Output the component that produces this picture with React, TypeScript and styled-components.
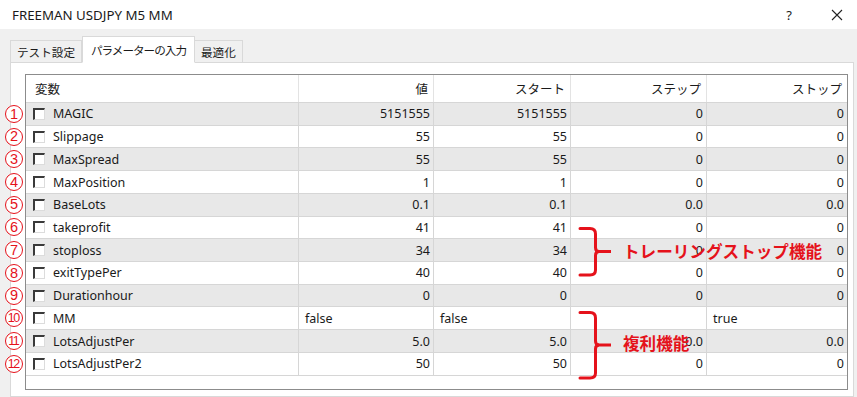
import React from 'react'
import styled, { createGlobalStyle } from 'styled-components'

const GlobalStyle = createGlobalStyle`
  html, body {
    margin: 0;
    padding: 0;
    background: #ffffff;
  }
  body {
    font-family: 'Noto Sans', 'Noto Sans CJK JP', sans-serif;
    color: #1a1a1a;
  }
`

const RED = '#e5121b'

const Window = styled.div`
  width: 857px;
  height: 397px;
  overflow: hidden;
  display: flex;
  flex-direction: column;
  background: #f0f0f0;
`

const TitleBar = styled.div`
  height: 29px;
  flex-shrink: 0;
  background: #ffffff;
  display: flex;
  align-items: center;
  gap: 8px;
  padding: 0 0 0 12px;
  font-size: 13.3px;
`

const TitleText = styled.div`
  flex: 1;
  padding-top: 1px;
`

const TitleButton = styled.div`
  width: 40px;
  height: 29px;
  display: flex;
  align-items: center;
  justify-content: center;
  font-size: 13px;
`

const TabStrip = styled.div`
  display: flex;
  align-items: flex-end;
  margin-top: 7px;
  padding-left: 10px;
  height: 27px;
  margin-bottom: -1px;
  position: relative;
  z-index: 1;
`

interface TabProps {
  active?: boolean
}

const Tab = styled.div<TabProps>`
  height: ${(p) => (p.active ? '27px' : '23px')};
  box-sizing: border-box;
  display: flex;
  align-items: center;
  padding: ${(p) => (p.active ? '0 8px 0 8px' : '0 6px 0 6px')};
  border: 1px solid #d9d9d9;
  border-bottom: ${(p) => (p.active ? '1px solid #ffffff' : '1px solid #d9d9d9')};
  border-left: ${(p) => (p.active ? '1px solid #d9d9d9' : 'none')};
  background: ${(p) => (p.active ? '#ffffff' : '#f0f0f0')};
  font-size: 11.6px;
  letter-spacing: ${(p) => (p.active ? '-1px' : '0')};
  &:first-child {
    border-left: 1px solid #d9d9d9;
  }
`

const Panel = styled.div`
  flex: 1;
  background: #ffffff;
  border: 1px solid #d9d9d9;
  margin-left: 10px;
  margin-right: 3px;
  padding: 11px 0 0 14px;
`

const ListBox = styled.div`
  position: relative;
  width: 823px;
  height: 316px;
  box-sizing: border-box;
  border: 1px solid #8c8c8c;
  background: #ffffff;
  font-size: 12.5px;
`

const GRID = '273px 135px 137px 136px 140px'

interface RowProps {
  shaded?: boolean
}

const HeaderRow = styled.div`
  display: grid;
  grid-template-columns: ${GRID};
  height: 28px;
  box-sizing: border-box;
  border-bottom: 1px solid #d6d6d6;
`

const HeaderCell = styled.div<{ left?: boolean }>`
  display: flex;
  align-items: center;
  justify-content: ${(p) => (p.left ? 'flex-start' : 'flex-end')};
  padding: ${(p) => (p.left ? '0 0 0 9px' : '0 5px 0 0')};
  border-right: 1px solid #e3e3e3;
  &:last-child {
    border-right: none;
  }
`

const Row = styled.div<RowProps>`
  position: relative;
  display: grid;
  grid-template-columns: ${GRID};
  height: 22.73px;
  box-sizing: border-box;
  border-bottom: 1px solid #d6d6d6;
  background: ${(p) => (p.shaded ? '#e8e8e8' : '#ffffff')};
`

const Cell = styled.div<{ left?: boolean }>`
  display: flex;
  align-items: center;
  justify-content: ${(p) => (p.left ? 'flex-start' : 'flex-end')};
  padding: ${(p) => (p.left ? '0 0 0 6px' : '0 3px 0 0')};
  border-right: 1px solid #d6d6d6;
  white-space: nowrap;
  &:last-child {
    border-right: none;
  }
`

const NameCell = styled.div`
  display: flex;
  align-items: center;
  gap: 8px;
  padding-left: 7px;
  border-right: 1px solid #d6d6d6;
`

const CheckBox = styled.span`
  width: 12px;
  height: 12px;
  box-sizing: border-box;
  background: #ffffff;
  border-style: solid;
  border-width: 2px 1px 1px 2px;
  border-color: #3a3a3a #dcdcdc #dcdcdc #3a3a3a;
`

const Marker = styled.span<{ wide?: boolean }>`
  position: absolute;
  left: -21px;
  top: 50%;
  margin-top: -9px;
  width: 18px;
  height: 18px;
  box-sizing: border-box;
  border: 1.5px solid ${RED};
  border-radius: 50%;
  background: #ffffff;
  color: ${RED};
  display: flex;
  align-items: center;
  justify-content: center;
  font-family: 'Liberation Sans', sans-serif;
  font-size: ${(p) => (p.wide ? '12.5px' : '14.5px')};
  letter-spacing: ${(p) => (p.wide ? '-1.5px' : '0')};
  line-height: 1;
  padding-right: ${(p) => (p.wide ? '1.5px' : '0')};
`

const Brace = styled.svg<{ x: number; y: number }>`
  position: absolute;
  left: ${(p) => p.x}px;
  top: ${(p) => p.y}px;
  overflow: visible;
`

const Note = styled.div<{ x: number; y: number }>`
  position: absolute;
  left: ${(p) => p.x}px;
  top: ${(p) => p.y}px;
  color: ${RED};
  font-family: 'Noto Sans CJK JP', sans-serif;
  font-weight: 700;
  font-size: 16.6px;
  line-height: 20px;
  white-space: nowrap;
`

type Param = {
  name: string
  value: string
  start: string
  step: string
  stop: string
  text?: boolean
}

const params: Param[] = [
  { name: 'MAGIC', value: '5151555', start: '5151555', step: '0', stop: '0' },
  { name: 'Slippage', value: '55', start: '55', step: '0', stop: '0' },
  { name: 'MaxSpread', value: '55', start: '55', step: '0', stop: '0' },
  { name: 'MaxPosition', value: '1', start: '1', step: '0', stop: '0' },
  { name: 'BaseLots', value: '0.1', start: '0.1', step: '0.0', stop: '0.0' },
  { name: 'takeprofit', value: '41', start: '41', step: '0', stop: '0' },
  { name: 'stoploss', value: '34', start: '34', step: '0', stop: '0' },
  { name: 'exitTypePer', value: '40', start: '40', step: '0', stop: '0' },
  { name: 'Durationhour', value: '0', start: '0', step: '0', stop: '0' },
  { name: 'MM', value: 'false', start: 'false', step: '', stop: 'true', text: true },
  { name: 'LotsAdjustPer', value: '5.0', start: '5.0', step: '0.0', stop: '0.0' },
  { name: 'LotsAdjustPer2', value: '50', start: '50', step: '0', stop: '0' },
]

const BracePath = ({ height }: { height: number }) => {
  const mid = height / 2
  return (
    <g fill="none" stroke={RED} strokeWidth={3} strokeLinecap="round">
      <path
        d={`M1 1.5 H11 Q16.5 1.5 16.5 7 V${mid - 4} Q16.5 ${mid} 20 ${mid} Q16.5 ${mid} 16.5 ${mid + 4} V${height - 6} Q16.5 ${height - 1} 11 ${height - 1} H1`}
      />
      <path d={`M19 ${mid} H32`} strokeLinecap="butt" />
    </g>
  )
}

const App = () => {
  return (
    <>
      <GlobalStyle />
      <Window>
        <TitleBar>
          <TitleText>FREEMAN USDJPY M5 MM</TitleText>
          <TitleButton>?</TitleButton>
          <TitleButton>
            <svg width="12" height="12" viewBox="0 0 12 12">
              <path d="M1 1 L11 11 M11 1 L1 11" stroke="#222" strokeWidth="1.1" />
            </svg>
          </TitleButton>
        </TitleBar>
        <TabStrip>
          <Tab>テスト設定</Tab>
          <Tab active>パラメーターの入力</Tab>
          <Tab>最適化</Tab>
        </TabStrip>
        <Panel>
          <ListBox>
            <HeaderRow>
              <HeaderCell left>変数</HeaderCell>
              <HeaderCell>値</HeaderCell>
              <HeaderCell>スタート</HeaderCell>
              <HeaderCell>ステップ</HeaderCell>
              <HeaderCell>ストップ</HeaderCell>
            </HeaderRow>
            {params.map((p, i) => (
              <Row key={p.name} shaded={i % 2 === 0}>
                <Marker wide={i >= 9}>{i + 1}</Marker>
                <NameCell>
                  <CheckBox />
                  {p.name}
                </NameCell>
                <Cell left={p.text}>{p.value}</Cell>
                <Cell left={p.text}>{p.start}</Cell>
                <Cell left={p.text}>{p.step}</Cell>
                <Cell left={p.text}>{p.stop}</Cell>
              </Row>
            ))}
            <Brace x={553} y={152} width={34} height={50}>
              <BracePath height={49} />
            </Brace>
            <Note x={597} y={166}>トレーリングストップ機能</Note>
            <Brace x={553} y={236} width={34} height={69}>
              <BracePath height={68} />
            </Brace>
            <Note x={597} y={258}>複利機能</Note>
          </ListBox>
        </Panel>
      </Window>
    </>
  )
}

export default App
